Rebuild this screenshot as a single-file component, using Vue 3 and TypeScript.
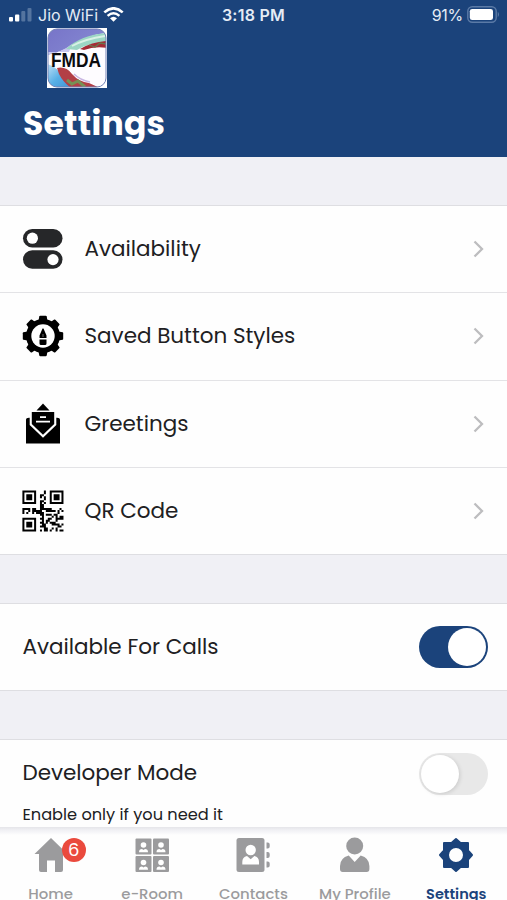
<script setup lang="ts">
interface MenuItem { id: string; label: string }
interface Tab { id: string; label: string; badge?: number; active?: boolean }

const menu: MenuItem[] = [
  { id: 'availability', label: 'Availability' },
  { id: 'styles', label: 'Saved Button Styles' },
  { id: 'greetings', label: 'Greetings' },
  { id: 'qr', label: 'QR Code' },
]

const tabs: Tab[] = [
  { id: 'home', label: 'Home', badge: 6 },
  { id: 'room', label: 'e-Room' },
  { id: 'contacts', label: 'Contacts' },
  { id: 'profile', label: 'My Profile' },
  { id: 'settings', label: 'Settings', active: true },
]

const qrRows: string[] = [
  '#######....#..#######',
  '#.....#....#..#.....#',
  '#.###.#..##...#.###.#',
  '#.###.#..#.#..#.###.#',
  '#.###.#....#..#.###.#',
  '#.....#..##...#.....#',
  '#######..#.#..#######',
  '.........##..........',
  '.........##..........',
  '####.##..######....#.',
  '#..#.#####..#####.#.#',
  '#.#..#.####.......#..',
  '.........##.###.##...',
  '..........#....#.#.##',
  '#######..##..##..####',
  '#.....#...#.##...#...',
  '#.###.#..##.#.###....',
  '#.###.#...##...####.#',
  '#.###.#..###......##.',
  '#.....#....##..#.#...',
  '#######..#.##.#..#.##',
]
const qrPath: string = qrRows
  .flatMap((row, y) => [...row].map((c, x) => (c === '#' ? `M${x} ${y}h1.03v1.03h-1.03z` : '')))
  .join('')
const teeth: number[] = [0, 45, 90, 135, 180, 225, 270, 315]
const seats: number[][] = [[0, 0], [17.5, 0], [0, 17.5], [17.5, 17.5]]
</script>

<template>
  <main class="screen">
    <header class="header">
      <div class="status">
        <div class="carrier">
          <svg class="signal" width="23" height="14" viewBox="0 0 23 14">
            <rect x="0" y="9" width="4" height="4.5" rx="1" fill="#fff" />
            <rect x="6" y="6.500" width="4.300" height="7" rx="1" fill="#fff" />
            <rect x="12.300" y="3" width="4" height="10.500" rx="1" fill="#54749f" />
            <rect x="18.500" y="0" width="4" height="13.500" rx="1" fill="#54749f" />
          </svg>
          <span class="network">Jio WiFi</span>
          <svg width="21" height="15" viewBox="0 0 21 15" fill="none" stroke="#fff">
            <path d="M1.300 5.400Q10.500-2.800 19.700 5.400" stroke-width="2.600" />
            <path d="M4.600 8.900Q10.500 3.700 16.400 8.900" stroke-width="2.500" />
            <path d="M7 11.300Q10.500 8.300 14 11.300L10.500 14.800Z" fill="#fff" stroke="none" />
          </svg>
        </div>
        <span class="time">3:18 PM</span>
        <div class="power">
          <span>91%</span>
          <svg width="33" height="17" viewBox="0 0 33 17">
            <rect x=".8" y=".8" width="28.400" height="15.400" rx="4.500" fill="none" stroke="#5b7aa6" stroke-width="1.400" />
            <rect x="2.800" y="2.900" width="23.200" height="11.200" rx="2.400" fill="#fff" />
            <path d="M30.800 5.800q2 2.700 0 5.400z" fill="#6c88b0" />
          </svg>
        </div>
      </div>
      <svg class="logo" width="60" height="60" viewBox="0 0 60 60">
        <defs>
          <clipPath id="logo-clip"><rect x="1" y="1" width="58" height="58" rx="9" /></clipPath>
          <linearGradient id="sky" x1="0" y1="0" x2="1" y2=".5">
            <stop offset="0" stop-color="#7774c8" /><stop offset="1" stop-color="#8588d2" />
          </linearGradient>
          <linearGradient id="water" x1="0" y1="0" x2="1" y2="1">
            <stop offset="0" stop-color="#c4e2f6" /><stop offset=".5" stop-color="#58b0e6" /><stop offset="1" stop-color="#3f8fd0" />
          </linearGradient>
        </defs>
        <rect width="60" height="60" fill="#fff" />
        <g clip-path="url(#logo-clip)">
          <rect width="60" height="60" fill="#fefcff" />
          <path d="M0 0H60V5Q40 7 24 18Q14 24 0 27Z" fill="url(#sky)" />
          <path d="M0 27Q15 24 25 16L22 24H0Z" fill="#c5c6ee" />
          <path d="M19 21Q34 7 60 5V14Q41 15 30 22Z" fill="#9cd6c4" />
          <path d="M25 18Q38 11 58 8" fill="none" stroke="#d9f2e5" stroke-width="1.800" />
          <path d="M33 21Q45 14 60 13V20Q48 18 37 22Z" fill="#a52c36" />
          <path d="M42 17L48 19L53 15L59 16" fill="none" stroke="#6b744c" stroke-width="1.300" />
          <path d="M0 36Q10 38 15 49L26 60H0Z" fill="url(#water)" />
          <path d="M10 40Q19 38 25 46Q32 54 42 55L53 60H24Q16 54 12 46Z" fill="#b33f46" />
          <path d="M20 52L25 56L31 53L38 59" fill="none" stroke="#779054" stroke-width="3" />
          <path d="M27 46Q33 52 43 54" fill="none" stroke="#c9b6e2" stroke-width="1.500" />
        </g>
        <rect x="1" y="1" width="58" height="58" rx="9" fill="none" stroke="#7281b5" stroke-width="1" />
        <text x="4" y="38.700" textLength="50" lengthAdjust="spacingAndGlyphs" class="logo-text">FMDA</text>
      </svg>
      <h1>Settings</h1>
    </header>

    <section class="group">
      <div v-for="item in menu" :key="item.id" class="row">
        <div class="icon">
          <svg v-if="item.id === 'availability'" width="42" height="42" viewBox="0 0 42 42">
            <rect x="1" y="1" width="39.500" height="18.500" rx="9.250" fill="#262729" />
            <rect x="1" y="22.300" width="39.500" height="18.500" rx="9.250" fill="#262729" />
            <circle cx="10.400" cy="10.200" r="5.600" fill="#fff" />
            <circle cx="31" cy="31.600" r="5.600" fill="#fff" />
          </svg>
          <svg v-else-if="item.id === 'styles'" width="42" height="42" viewBox="0 0 42 42">
            <circle cx="21" cy="21" r="17" />
            <path v-for="a in teeth" :key="a" d="M16.300 7L17.300 1.400Q17.500.8 18.300.8H23.700Q24.500.8 24.700 1.400L25.700 7Z" :transform="`rotate(${a} 21 21)`" />
            <circle cx="21" cy="21" r="11.700" fill="#fff" />
            <path d="M20.500 13.500H21.500L24.500 20.500V23H17.500V20.500ZM17.500 24.600H24.500V28.500Q24.500 30 23 30H19Q17.500 30 17.500 28.500Z" />
            <path d="M21 19V22" stroke="#999" stroke-width=".7" />
          </svg>
          <svg v-else-if="item.id === 'greetings'" width="42" height="42" viewBox="0 0 42 42">
            <path d="M21 .5L27.500 7.500H14.500Z" />
            <path d="M9.800 9H32.200V21L21 31.700L9.800 21Z" />
            <path d="M4 17Q4 14.500 7.700 14.800V22L21 34.700L34.300 22V14.800Q38 14.500 38 17V40.500H4Z" />
            <path d="M18 14.200H24M14 18.700H28" stroke="#fff" stroke-width="1.800" />
          </svg>
          <svg v-else width="42" height="42" viewBox="-.2 -.2 21.500 21.500"><path :d="qrPath" /></svg>
        </div>
        <span class="label">{{ item.label }}</span>
        <svg class="chevron" width="12" height="18" viewBox="0 0 12 18" fill="none" stroke="#bdbdbf" stroke-width="2.300">
          <path d="M1.500 1.500L9 9L1.500 16.500" />
        </svg>
      </div>
    </section>

    <section class="group">
      <div class="row setting">
        <span class="label">Available For Calls</span>
        <button class="toggle on" type="button" role="switch" aria-checked="true"><span class="knob"></span></button>
      </div>
    </section>

    <section class="group last">
      <div class="row developer">
        <div>
          <span class="label">Developer Mode</span>
          <p class="hint">Enable only if you need it</p>
        </div>
        <button class="toggle" type="button" role="switch" aria-checked="false"><span class="knob"></span></button>
      </div>
    </section>

    <nav class="tabs">
      <div v-for="tab in tabs" :key="tab.id" class="tab" :class="{ active: tab.active }">
        <div class="tab-icon">
          <svg v-if="tab.id === 'home'" width="36" height="36" viewBox="0 0 36 36" fill="currentColor">
            <path d="M18 1L34.500 17H30V33Q30 35 28 35H22V23.500H14V35H8Q6 35 6 33V17H1.500Z" />
          </svg>
          <svg v-else-if="tab.id === 'room'" width="36" height="36" viewBox="0 0 36 36">
            <g v-for="(p, i) in seats" :key="i" :transform="`translate(${p[0]} ${p[1]})`">
              <rect x="1.500" y="1.500" width="16" height="16" rx="1" fill="currentColor" />
              <circle cx="9.500" cy="8" r="2.800" fill="#fff" />
              <path d="M5 15.200Q5 12 8 12L9.500 13L11 12Q14 12 14 15.200Z" fill="#fff" />
            </g>
          </svg>
          <svg v-else-if="tab.id === 'contacts'" width="36" height="36" viewBox="0 0 36 36">
            <rect x="1.500" y="1" width="28" height="34" rx="2.500" fill="currentColor" />
            <path d="M31.500 5.500h1.200q2 0 2 2v2q0 2-2 2h-1.200zM31.500 15h1.200q2 0 2 2v2q0 2-2 2h-1.200zM31.500 24.500h1.200q2 0 2 2v2q0 2-2 2h-1.200z" fill="currentColor" />
            <circle cx="15.700" cy="13" r="5.200" fill="#fff" />
            <path d="M7.300 27.500V25Q7.300 20 12 19L15.700 22.300L19.400 19Q24 20 24 25V27.500Z" fill="#fff" />
          </svg>
          <svg v-else-if="tab.id === 'profile'" width="36" height="36" viewBox="0 0 36 36" fill="currentColor">
            <circle cx="17.700" cy="9" r="8.500" />
            <path d="M3 32V29Q3 21 11.700 18.500L17.700 25L23.700 18.500Q32.400 21 32.400 29V32Q32.400 35 29.700 35H5.700Q3 35 3 32Z" />
          </svg>
          <svg v-else width="36" height="36" viewBox="0 0 36 36" fill="currentColor">
            <path fill-rule="evenodd" stroke="currentColor" stroke-width="2" stroke-linejoin="round" d="M18 2L22.500 6H30V13.500L34 18L30 22.500V30H22.500L18 34L13.500 30H6V22.500L2 18L6 13.500V6H13.500ZM18 10A8 8 0 1 0 18 26A8 8 0 1 0 18 10Z" />
          </svg>
          <span v-if="tab.badge" class="badge">{{ tab.badge }}</span>
        </div>
        <span class="tab-label">{{ tab.label }}</span>
      </div>
    </nav>
  </main>
</template>

<style>
body { margin: 0; overflow: hidden; }
</style>

<style scoped>
* { box-sizing: border-box; }
.screen { width: 507px; height: 900px; overflow: hidden; display: flex; flex-direction: column; gap: 48px; background: #f0f0f5; color: #202022; font-family: Poppins, Inter, sans-serif; }
.header { height: 157px; flex: none; background: #1b437b; color: #fff; display: flex; flex-direction: column; }
.status { height: 28px; padding: 1px 9px 0; display: grid; grid-template-columns: 1fr auto 1fr; align-items: center; font-family: Inter, sans-serif; font-size: 16px; color: #e5ecf5; }
.carrier, .power { display: flex; align-items: center; }
.signal { margin-right: 6px; }
.network { width: 60px; margin-right: 5px; white-space: nowrap; }
.time { font-weight: 600; font-size: 16px; letter-spacing: .25px; }
.power { justify-content: flex-end; gap: 4px; letter-spacing: -.3px; margin-right: -2px; }
.logo { margin-left: 46.500px; flex: none; }
.logo-text { font: 700 20px "Liberation Sans", sans-serif; fill: #0b0b0e; }
h1 { margin: 15px 0 0 23px; font-size: 33px; line-height: 42px; font-weight: 700; letter-spacing: .25px; }
.group { background: #fefefe; border-top: 1px solid #dedee2; border-bottom: 1px solid #dedee2; flex: none; }
.group:nth-of-type(1) { height: 350px; }
.row { height: 87.500px; display: flex; align-items: center; padding: 0 20px 0 22px; }
.row:first-child { height: 86px; }
.row + .row { border-top: 1.500px solid #e3e3e6; }
.icon { width: 42px; height: 42px; margin-right: 20.500px; }
.icon svg, .tab-icon svg { display: block; }
.label { font-size: 21.500px; line-height: 28px; white-space: nowrap; letter-spacing: -.02px; }
.chevron { margin-left: auto; margin-right: 2px; }
.row.setting, .row.developer { justify-content: space-between; padding-left: 22.500px; padding-right: 19px; }
.toggle { width: 69px; height: 42px; padding: 2px; border: 0; border-radius: 21px; background: #e8e8e8; display: flex; flex: none; }
.knob { width: 38px; height: 38px; border-radius: 50%; background: #fff; box-shadow: 1px 1px 4px #0002; }
.on { background: #1b437b; justify-content: flex-end; }
.on .knob { box-shadow: none; }
.last { border-bottom: 0; }
.row.developer { height: 87px; align-items: flex-start; padding-top: 13px; }
.developer .label { display: block; margin-top: 6px; }
.hint { margin: 17px 0 0; font-size: 16.200px; line-height: 22px; white-space: nowrap; }
.tabs { height: 73px; flex: none; margin-top: -48px; display: grid; grid-template-columns: repeat(5, 1fr); background: linear-gradient(#e5e5e9 0, #f0f0f4 3px, #f5f5f8 5px, #fefefe 8px); }
.tab { display: flex; flex-direction: column; align-items: center; padding-top: 10px; color: #9b9b9d; }
.tab-icon { position: relative; width: 36px; height: 36px; }
.tab-label { margin-top: 10px; font-size: 14.900px; font-weight: 500; line-height: 22px; white-space: nowrap; }
.active { color: #1b437b; }
.active .tab-label { font-size: 14.500px; font-weight: 600; }
.badge { position: absolute; left: 29px; top: 1px; width: 24px; height: 24px; border-radius: 50%; background: #ea4a3d; color: #fff; display: grid; place-items: center; font-size: 18px; line-height: 24px; }
</style>
